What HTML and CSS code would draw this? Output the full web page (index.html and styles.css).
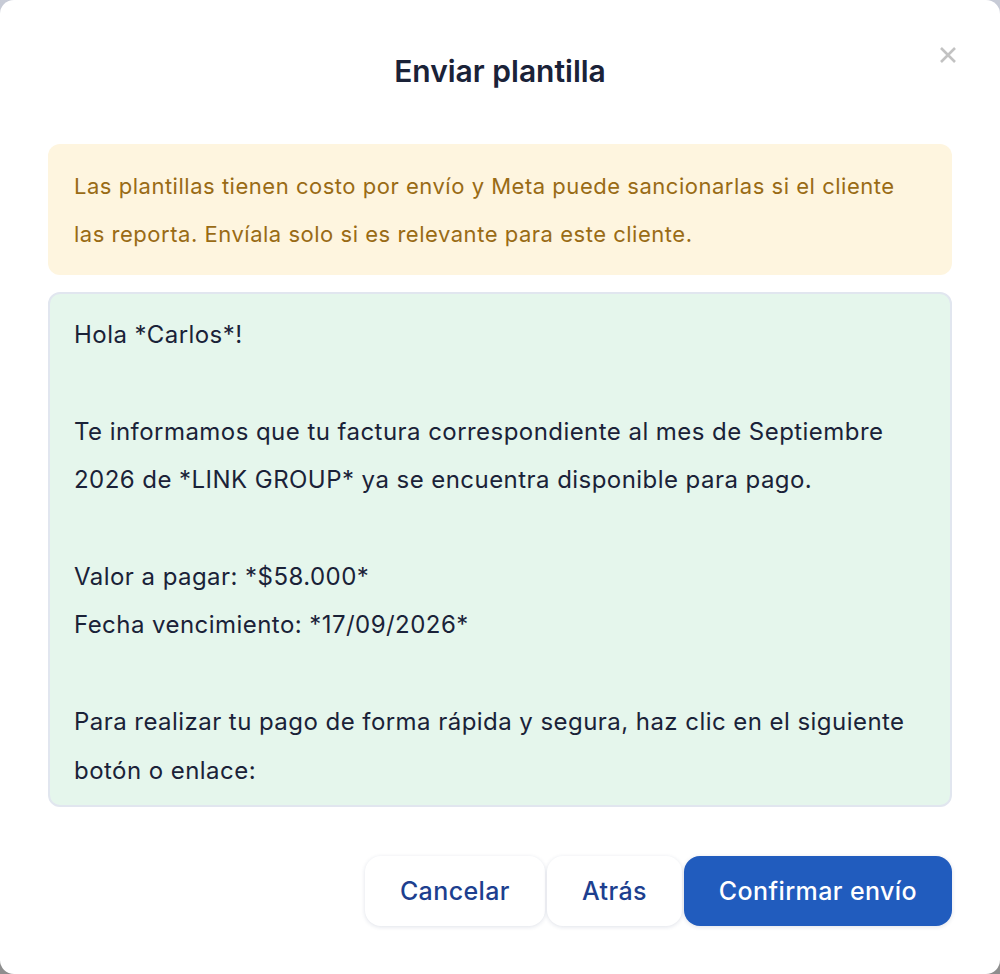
FILE: index.html
```html
<!DOCTYPE html>
<html lang="es">
<head>
<meta charset="utf-8">
<title>Enviar plantilla</title>
<link rel="stylesheet" href="styles.css">
</head>
<body>
<div class="modal">
  <button class="close" aria-label="Cerrar">
    <svg width="18" height="18" viewBox="0 0 18 18"><path d="M2 2 L16 16 M16 2 L2 16" stroke="#c2c2c2" stroke-width="2.6" stroke-linecap="butt"/></svg>
  </button>
  <h2 class="title">Enviar plantilla</h2>
  <div class="warning">Las plantillas tienen costo por envío y Meta puede sancionarlas si el cliente las reporta. Envíala solo si es relevante para este cliente.</div>
  <div class="message">Hola *Carlos*!

Te informamos que tu factura correspondiente al mes de Septiembre 2026 de *LINK GROUP* ya se encuentra disponible para pago.

Valor a pagar: *$58.000*
Fecha vencimiento: *17/09/2026*

Para realizar tu pago de forma rápida y segura, haz clic en el siguiente botón o enlace:</div>
  <div class="actions">
    <button class="btn btn-light">Cancelar</button>
    <button class="btn btn-light">Atrás</button>
    <button class="btn btn-primary">Confirmar envío</button>
  </div>
</div>
</body>
</html>
```

FILE: styles.css
```css
* { box-sizing: border-box; }
html, body { margin: 0; padding: 0; }
body {
  width: 1000px;
  height: 974px;
  background: linear-gradient(180deg, #c7cbd6 0%, #a9abb1 50%, #8e8e8e 100%);
  font-family: Inter, "Noto Sans", sans-serif;
  overflow: hidden;
}
.modal {
  position: relative;
  width: 1000px;
  height: 974px;
  background: #ffffff;
  border-radius: 14px;
  padding: 54px 48px 0 48px;
  display: flex;
  flex-direction: column;
}
.close {
  position: absolute;
  top: 46px;
  left: 939px;
  width: 18px;
  height: 18px;
  padding: 0;
  border: 0;
  background: transparent;
  display: flex;
}
.title {
  margin: 0;
  text-align: center;
  font-size: 30px;
  line-height: 34px;
  font-weight: 600;
  color: #1a2238;
}
.warning {
  margin-top: 56px;
  background: #fef5df;
  border-radius: 12px;
  padding: 18px 44px 17px 26px;
  color: #996b15;
  font-size: 22px;
  letter-spacing: 0.52px;
  line-height: 48px;
}
.message {
  margin-top: 17px;
  height: 515px;
  overflow: hidden;
  background: #e5f6ec;
  border: 2px solid #e1e6ef;
  border-radius: 12px;
  padding: 17px 24px 0 24px;
  white-space: pre-wrap;
  color: #1a2238;
  font-size: 24px;
  letter-spacing: 0.45px;
  line-height: 48.4px;
}
.actions {
  margin-top: 49px;
  display: flex;
  justify-content: flex-end;
  gap: 2px;
}
.btn {
  height: 70px;
  padding: 0 35px;
  border-radius: 16px;
  border: 0;
  font-family: Inter, "Noto Sans", sans-serif;
  font-size: 25px;
  letter-spacing: 0.4px;
  line-height: 30px;
  font-weight: 500;
}
.btn-light {
  background: #ffffff;
  color: #1d3f8f;
  box-shadow: 0 1px 4px rgba(30, 50, 100, 0.14);
}
.btn-primary {
  background: #215cbe;
  color: #ffffff;
  box-shadow: 0 1px 4px rgba(30, 50, 100, 0.14);
}
```
